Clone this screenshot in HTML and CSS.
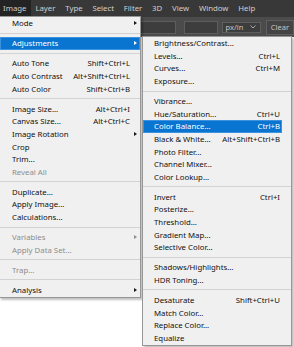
FILE: index.html
```html
<!DOCTYPE html>
<html>
  <head>
    <title>Image menu</title>
    <link rel="stylesheet" href="styles.css">
  </head>
  <body>
    <div class="menubar">
      <span class="mb-item active">Image</span>
      <span class="mb-item">Layer</span>
      <span class="mb-item">Type</span>
      <span class="mb-item">Select</span>
      <span class="mb-item">Filter</span>
      <span class="mb-item">3D</span>
      <span class="mb-item">View</span>
      <span class="mb-item">Window</span>
      <span class="mb-item">Help</span>
    </div>
    <div class="optionsbar">
      <span class="field f1"></span>
      <span class="field f2"></span>
      <span class="dropdown">px/in
        <svg width="6" height="4" viewBox="0 0 6 4"><path d="M0.5 0.5 L3 3 L5.5 0.5" fill="none" stroke="#a8a8a8" stroke-width="1"/></svg>
      </span>
      <span class="btn">Clear</span>
    </div>
    <div class="workspace"></div>

    <div class="menu main">
      <div class="item sub-arrow">Mode</div>
      <div class="sep"></div>
      <div class="item sub-arrow hover">Adjustments</div>
      <div class="sep"></div>
      <div class="item"><span class="label">Auto Tone</span><span class="key">Shift+Ctrl+L</span></div>
      <div class="item"><span class="label">Auto Contrast</span><span class="key">Alt+Shift+Ctrl+L</span></div>
      <div class="item"><span class="label">Auto Color</span><span class="key">Shift+Ctrl+B</span></div>
      <div class="sep"></div>
      <div class="item"><span class="label">Image Size...</span><span class="key">Alt+Ctrl+I</span></div>
      <div class="item"><span class="label">Canvas Size...</span><span class="key">Alt+Ctrl+C</span></div>
      <div class="item sub-arrow">Image Rotation</div>
      <div class="item">Crop</div>
      <div class="item">Trim...</div>
      <div class="item disabled">Reveal All</div>
      <div class="sep"></div>
      <div class="item">Duplicate...</div>
      <div class="item">Apply Image...</div>
      <div class="item">Calculations...</div>
      <div class="sep"></div>
      <div class="item sub-arrow disabled">Variables</div>
      <div class="item disabled">Apply Data Set...</div>
      <div class="sep"></div>
      <div class="item disabled">Trap...</div>
      <div class="sep"></div>
      <div class="item sub-arrow">Analysis</div>
    </div>

    <div class="menu submenu">
      <div class="item">Brightness/Contrast...</div>
      <div class="item"><span class="label">Levels...</span><span class="key">Ctrl+L</span></div>
      <div class="item"><span class="label">Curves...</span><span class="key">Ctrl+M</span></div>
      <div class="item">Exposure...</div>
      <div class="sep"></div>
      <div class="item">Vibrance...</div>
      <div class="item"><span class="label">Hue/Saturation...</span><span class="key">Ctrl+U</span></div>
      <div class="item hover"><span class="label">Color Balance...</span><span class="key">Ctrl+B</span></div>
      <div class="item"><span class="label">Black &amp; White...</span><span class="key">Alt+Shift+Ctrl+B</span></div>
      <div class="item">Photo Filter...</div>
      <div class="item">Channel Mixer...</div>
      <div class="item">Color Lookup...</div>
      <div class="sep"></div>
      <div class="item"><span class="label">Invert</span><span class="key">Ctrl+I</span></div>
      <div class="item">Posterize...</div>
      <div class="item">Threshold...</div>
      <div class="item">Gradient Map...</div>
      <div class="item">Selective Color...</div>
      <div class="sep"></div>
      <div class="item">Shadows/Highlights...</div>
      <div class="item">HDR Toning...</div>
      <div class="sep"></div>
      <div class="item"><span class="label">Desaturate</span><span class="key">Shift+Ctrl+U</span></div>
      <div class="item">Match Color...</div>
      <div class="item">Replace Color...</div>
      <div class="item">Equalize</div>
    </div>
  </body>
</html>
```

FILE: styles.css
```css
body {
  margin: 0;
  width: 294px;
  height: 347px;
  overflow: hidden;
  position: relative;
  font-family: "Noto Sans", sans-serif;
  font-size: 7.8px;
  background: #fff;
}
.menubar {
  height: 17px;
  background: #383838;
  display: flex;
  align-items: center;
}
.mb-item {
  color: #cfcfcf;
  padding: 0 4.9px;
  line-height: 17px;
}
.mb-item.active {
  background: #232323;
  padding: 0 4px 0 3px;
}
.optionsbar {
  height: 20px;
  background: #4b4b4b;
  display: flex;
  align-items: center;
  padding-left: 100px;
  gap: 8px;
}
.field {
  height: 11px;
  background: #3d3d3d;
  border: 1px solid #5e5e5e;
}
.f1 {
  width: 81px;
}
.f2 {
  width: 34px;
}
.dropdown {
  width: 42px;
  height: 11px;
  margin-left: -4px;
  background: #3d3d3d;
  border: 1px solid #5e5e5e;
  color: #c4c4c4;
  font-size: 7.5px;
  display: flex;
  align-items: center;
  justify-content: space-between;
  padding: 0 4px 0 3px;
  box-sizing: border-box;
}
.btn {
  height: 13px;
  padding: 0 4px;
  margin-left: -3px;
  background: #444;
  border: 1px solid #5e5e5e;
  color: #c4c4c4;
  font-size: 7.5px;
  line-height: 13px;
}
.workspace {
  height: 310px;
  background: #fff;
}
.menu {
  position: absolute;
  background: #f0f0f0;
  border: 1px solid #979797;
  box-shadow: 2px 2px 2px rgba(0, 0, 0, 0.25);
  color: #111;
}
.main {
  left: -1px;
  top: 16px;
  width: 140px;
  padding-bottom: 1px;
}
.submenu {
  left: 142px;
  top: 36px;
  width: 148px;
  padding-bottom: 1px;
}
.item {
  height: 12.6px;
  display: flex;
  align-items: center;
  padding: 0 10px 0 12px;
  position: relative;
  white-space: nowrap;
}
.submenu .item {
  padding: 0 2px 0 11px;
  margin-right: 9px;
}
.label {
  flex: 1;
}
.key {
  text-align: right;
}
.disabled {
  color: #8d8d8d;
}
.hover {
  background: #0a74d1;
  color: #fff;
  box-shadow: inset 0 0 0 1px #3b93e0;
}
.sep {
  height: 7.5px;
  display: flex;
  align-items: center;
}
.sep::before {
  content: "";
  flex: 1;
  height: 1px;
  background: #d2d2d2;
}
.sub-arrow::after {
  content: "";
  position: absolute;
  right: 3px;
  top: 4px;
  border-left: 3px solid #1a1a1a;
  border-top: 2.5px solid transparent;
  border-bottom: 2.5px solid transparent;
}
.sub-arrow.hover::after {
  border-left-color: #fff;
}
.sub-arrow.disabled::after {
  border-left-color: #8d8d8d;
}
```
